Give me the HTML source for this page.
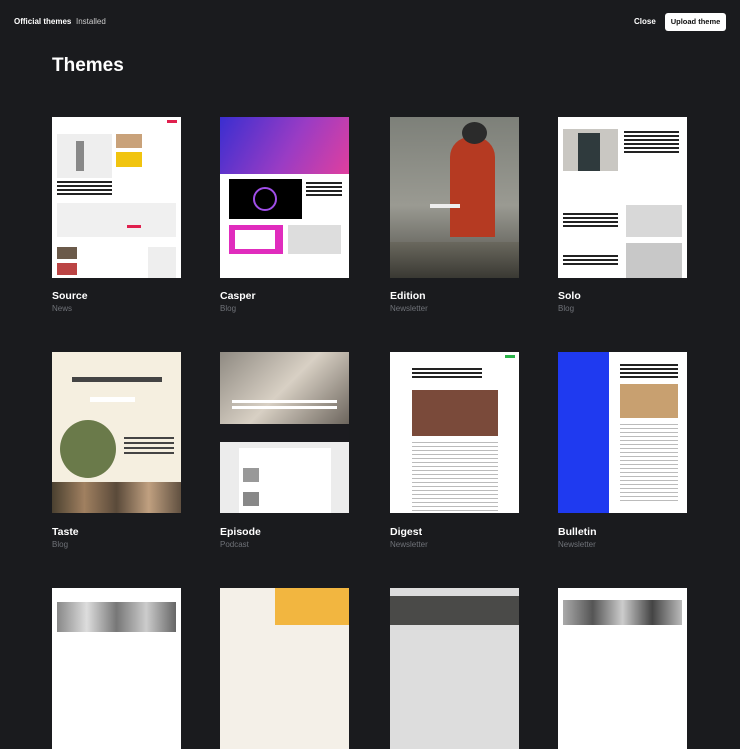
<!DOCTYPE html>
<html><head><meta charset="utf-8"><style>
*{margin:0;padding:0;box-sizing:border-box}
body{width:740px;height:625px;overflow:hidden;background:#1a1b1e;font-family:"Liberation Sans",sans-serif;color:#fff;position:relative}
.a{position:absolute}
.t{position:absolute;width:129px;height:161px;overflow:hidden;background:#fff}
.n{position:absolute;font-size:10.5px;font-weight:bold;color:#fff}
.c{position:absolute;font-size:8px;color:#6f7278}
.b{position:absolute}
</style></head><body>
<div class="a" style="left:14px;top:17px;font-size:8px;font-weight:bold">Official themes</div>
<div class="a" style="left:76px;top:17px;font-size:8px;color:#ccc">Installed</div>
<div class="a" style="left:634px;top:17px;font-size:8px;font-weight:bold">Close</div>
<div class="a" style="left:665px;top:13px;width:61px;height:18px;background:#fff;border-radius:3px;color:#111;font-size:7.5px;font-weight:bold;text-align:center;line-height:18px">Upload theme</div>
<div class="a" style="left:52px;top:55px;font-size:19px;font-weight:bold">Themes</div>

<!-- Source -->
<div class="t" style="left:52px;top:117px">
<div class="b" style="left:5px;top:17px;width:55px;height:44px;background:#eee"></div>
<div class="b" style="left:24px;top:24px;width:8px;height:30px;background:#888"></div>
<div class="b" style="left:64px;top:17px;width:26px;height:14px;background:#c9a27a"></div>
<div class="b" style="left:64px;top:35px;width:26px;height:15px;background:#f1c40f"></div>
<div class="b" style="left:5px;top:64px;width:55px;height:14px;background:repeating-linear-gradient(#222 0 2px,#fff 2px 4px)"></div>
<div class="b" style="left:5px;top:86px;width:119px;height:34px;background:#f0f0f0"></div>
<div class="b" style="left:75px;top:108px;width:14px;height:3px;background:#e0204e"></div>
<div class="b" style="left:5px;top:130px;width:20px;height:12px;background:#6b5a4a"></div>
<div class="b" style="left:5px;top:146px;width:20px;height:12px;background:#b44"></div>
<div class="b" style="left:96px;top:130px;width:28px;height:31px;background:#eee"></div>
<div class="b" style="left:115px;top:3px;width:10px;height:3px;background:#e0204e"></div>
</div>
<div class="n" style="left:52px;top:290px">Source</div><div class="c" style="left:52px;top:304px">News</div>

<!-- Casper -->
<div class="t" style="left:220px;top:117px">
<div class="b" style="left:0;top:0;width:129px;height:57px;background:linear-gradient(120deg,#3a2ed0,#9a3cc4 55%,#e03f9e)"></div>
<div class="b" style="left:9px;top:62px;width:73px;height:40px;background:#000"></div>
<div class="b" style="left:33px;top:70px;width:24px;height:24px;border:2px solid #a04ee8;border-radius:50%"></div>
<div class="b" style="left:86px;top:65px;width:36px;height:16px;background:repeating-linear-gradient(#222 0 2px,#fff 2px 4px)"></div>
<div class="b" style="left:9px;top:108px;width:54px;height:29px;background:#e02cbd"></div>
<div class="b" style="left:15px;top:113px;width:40px;height:19px;background:#fff"></div>
<div class="b" style="left:68px;top:108px;width:53px;height:29px;background:#ddd"></div>
</div>
<div class="n" style="left:220px;top:290px">Casper</div><div class="c" style="left:220px;top:304px">Blog</div>

<!-- Edition -->
<div class="t" style="left:390px;top:117px;background:linear-gradient(#7d8079,#9a9a92 55%,#4b4a44)">
<div class="b" style="left:60px;top:20px;width:45px;height:100px;background:#b53a22;border-radius:20px 20px 0 0"></div>
<div class="b" style="left:72px;top:5px;width:25px;height:22px;background:#2b2b2b;border-radius:50%"></div>
<div class="b" style="left:0;top:125px;width:129px;height:36px;background:linear-gradient(#6a685e,#3a3933)"></div>
<div class="b" style="left:40px;top:87px;width:30px;height:4px;background:#eee"></div>
</div>
<div class="n" style="left:390px;top:290px">Edition</div><div class="c" style="left:390px;top:304px">Newsletter</div>

<!-- Solo -->
<div class="t" style="left:558px;top:117px">
<div class="b" style="left:5px;top:12px;width:55px;height:42px;background:#c9c7c2"></div>
<div class="b" style="left:20px;top:16px;width:22px;height:38px;background:#2f3a3d"></div>
<div class="b" style="left:66px;top:14px;width:55px;height:22px;background:repeating-linear-gradient(#222 0 2px,#fff 2px 4px)"></div>
<div class="b" style="left:5px;top:96px;width:55px;height:15px;background:repeating-linear-gradient(#222 0 2px,#fff 2px 4px)"></div>
<div class="b" style="left:68px;top:88px;width:56px;height:32px;background:#d8d8d8"></div>
<div class="b" style="left:5px;top:138px;width:55px;height:10px;background:repeating-linear-gradient(#222 0 2px,#fff 2px 4px)"></div>
<div class="b" style="left:68px;top:126px;width:56px;height:35px;background:#c8c8c8"></div>
</div>
<div class="n" style="left:558px;top:290px">Solo</div><div class="c" style="left:558px;top:304px">Blog</div>

<!-- Taste -->
<div class="t" style="left:52px;top:352px;background:#f5efe0">
<div class="b" style="left:20px;top:25px;width:90px;height:5px;background:#444"></div>
<div class="b" style="left:38px;top:45px;width:45px;height:5px;background:#fff"></div>
<div class="b" style="left:8px;top:68px;width:56px;height:58px;background:#6a7a4a;border-radius:50%"></div>
<div class="b" style="left:72px;top:85px;width:50px;height:20px;background:repeating-linear-gradient(#444 0 2px,#f5efe0 2px 5px)"></div>
<div class="b" style="left:0;top:130px;width:129px;height:31px;background:linear-gradient(90deg,#4a4030,#a08060,#5a4a3a,#c0a080,#605040)"></div>
</div>
<div class="n" style="left:52px;top:526px">Taste</div><div class="c" style="left:52px;top:540px">Blog</div>

<!-- Episode -->
<div class="t" style="left:220px;top:352px;background:#ececec">
<div class="b" style="left:0;top:0;width:129px;height:72px;background:linear-gradient(135deg,#8f8a82,#d8d0c4 50%,#6c655d)"></div>
<div class="b" style="left:12px;top:48px;width:105px;height:12px;background:repeating-linear-gradient(#fff 0 3px,transparent 3px 6px)"></div>
<div class="b" style="left:0;top:72px;width:129px;height:18px;background:#1b1b1f"></div>
<div class="b" style="left:19px;top:96px;width:92px;height:65px;background:#fff"></div>
<div class="b" style="left:23px;top:116px;width:16px;height:14px;background:#999"></div>
<div class="b" style="left:23px;top:140px;width:16px;height:14px;background:#888"></div>
</div>
<div class="n" style="left:220px;top:526px">Episode</div><div class="c" style="left:220px;top:540px">Podcast</div>

<!-- Digest -->
<div class="t" style="left:390px;top:352px">
<div class="b" style="left:22px;top:16px;width:70px;height:10px;background:repeating-linear-gradient(#222 0 2px,#fff 2px 4px)"></div>
<div class="b" style="left:22px;top:38px;width:86px;height:46px;background:#7a4a3a"></div>
<div class="b" style="left:22px;top:90px;width:86px;height:70px;background:repeating-linear-gradient(#bbb 0 1px,#fff 1px 4px)"></div>
<div class="b" style="left:115px;top:3px;width:10px;height:3px;background:#2bb44a"></div>
</div>
<div class="n" style="left:390px;top:526px">Digest</div><div class="c" style="left:390px;top:540px">Newsletter</div>

<!-- Bulletin -->
<div class="t" style="left:558px;top:352px">
<div class="b" style="left:0;top:0;width:51px;height:161px;background:#1f3af0"></div>
<div class="b" style="left:62px;top:12px;width:58px;height:14px;background:repeating-linear-gradient(#222 0 2px,#fff 2px 4px)"></div>
<div class="b" style="left:62px;top:32px;width:58px;height:34px;background:#c8a070"></div>
<div class="b" style="left:62px;top:72px;width:58px;height:80px;background:repeating-linear-gradient(#bbb 0 1px,#fff 1px 4px)"></div>
</div>
<div class="n" style="left:558px;top:526px">Bulletin</div><div class="c" style="left:558px;top:540px">Newsletter</div>

<!-- Row 3 -->
<div class="t" style="left:52px;top:588px"><div class="b" style="left:5px;top:14px;width:119px;height:30px;background:linear-gradient(90deg,#888,#ddd,#777,#ccc,#666)"></div></div>
<div class="t" style="left:220px;top:588px;background:#f4f0e8"><div class="b" style="left:55px;top:0;width:74px;height:37px;background:#f2b640"></div></div>
<div class="t" style="left:390px;top:588px;background:#ddd"><div class="b" style="left:0;top:8px;width:129px;height:29px;background:#4a4a48"></div></div>
<div class="t" style="left:558px;top:588px"><div class="b" style="left:5px;top:12px;width:119px;height:25px;background:linear-gradient(90deg,#aaa,#555,#ccc,#444,#bbb)"></div></div>
</body></html>
